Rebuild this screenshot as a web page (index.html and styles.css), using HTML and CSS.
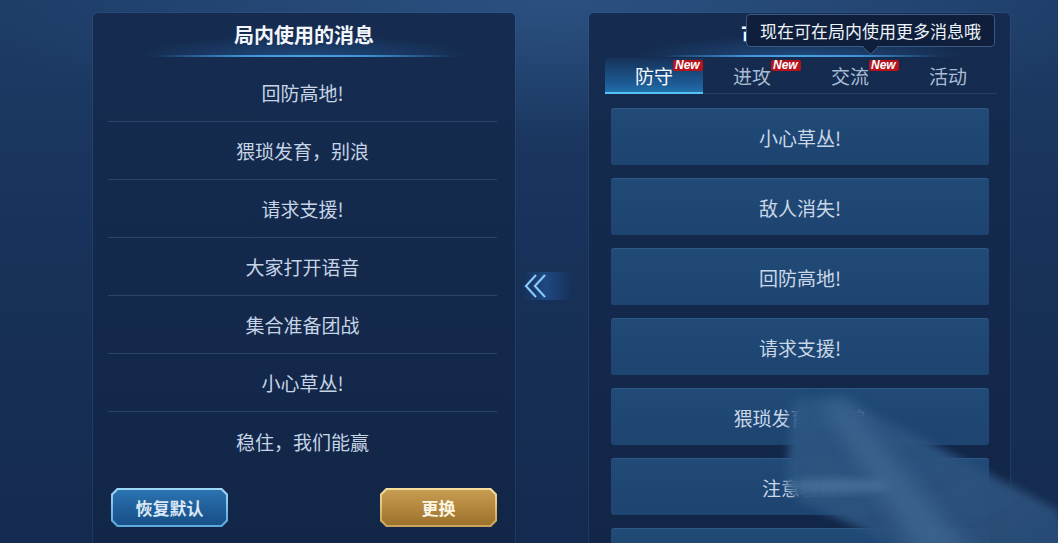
FILE: index.html
```html
<!DOCTYPE html>
<html lang="zh-CN">
<head>
<meta charset="utf-8">
<title>消息设置</title>
<link rel="stylesheet" href="styles.css">
</head>
<body>
<div class="screen">
  <section class="panel panel-left">
    <header class="panel-title">局内使用的消息</header>
    <ul class="msg-list">
      <li>回防高地!</li>
      <li>猥琐发育，别浪</li>
      <li>请求支援!</li>
      <li>大家打开语音</li>
      <li>集合准备团战</li>
      <li>小心草丛!</li>
      <li>稳住，我们能赢</li>
    </ul>
    <div class="actions">
      <button class="btn btn-blue"><span>恢复默认</span></button>
      <button class="btn btn-gold"><span>更换</span></button>
    </div>
  </section>

  <div class="mid">
    <div class="arrow">
      <svg width="26" height="28" viewBox="0 0 26 28">
        <path d="M12 3 L2 14 L12 25" fill="none" stroke="#5aa6ea" stroke-width="2.6"/>
        <path d="M21 3 L11 14 L21 25" fill="none" stroke="#5aa6ea" stroke-width="2.6"/>
        <path d="M12 3 L2 14 L12 25" fill="none" stroke="#d2eaff" stroke-width="0.9"/>
        <path d="M21 3 L11 14 L21 25" fill="none" stroke="#d2eaff" stroke-width="0.9"/>
      </svg>
    </div>
  </div>

  <section class="panel panel-right">
    <header class="panel-title">可更换的消息</header>
    <div class="tooltip">现在可在局内使用更多消息哦</div>
    <nav class="tabs">
      <div class="tab active"><span class="tab-label">防守<i class="badge">New</i></span></div>
      <div class="tab"><span class="tab-label">进攻<i class="badge">New</i></span></div>
      <div class="tab"><span class="tab-label">交流<i class="badge">New</i></span></div>
      <div class="tab"><span class="tab-label">活动</span></div>
    </nav>
    <div class="cards">
      <div class="card">小心草丛!</div>
      <div class="card">敌人消失!</div>
      <div class="card">回防高地!</div>
      <div class="card">请求支援!</div>
      <div class="card">猥琐发育，别浪</div>
      <div class="card">注意埋伏</div>
      <div class="card"></div>
    </div>
  </section>

  <svg class="streak" width="300" height="180" viewBox="0 0 300 180">
    <defs>
      <filter id="blur" x="-30%" y="-30%" width="160%" height="160%">
        <feGaussianBlur stdDeviation="4"/>
      </filter>
      <filter id="blur2" x="-30%" y="-30%" width="160%" height="160%">
        <feGaussianBlur stdDeviation="9"/>
      </filter>
      <linearGradient id="sg" x1="0" y1="0" x2="1" y2="1">
        <stop offset="0" stop-color="#2c5682" stop-opacity="1"/>
        <stop offset="1" stop-color="#2a4e78" stop-opacity="0.92"/>
      </linearGradient>
    </defs>
    <polygon points="22,22 72,19 288,132 300,175 150,178 28,122 16,106" fill="url(#sg)" filter="url(#blur)"/>
    <polygon points="52,26 76,24 205,178 150,178" fill="#3f6993" opacity="0.7" filter="url(#blur2)"/>
    <ellipse cx="68" cy="108" rx="50" ry="7" fill="#557fa8" opacity="0.6" filter="url(#blur)"/>
  </svg>
</div>
</body>
</html>
```
FILE: styles.css
```css
* { box-sizing: border-box; }
html, body { margin: 0; padding: 0; }
body {
  width: 1058px;
  height: 543px;
  overflow: hidden;
  font-family: "Noto Sans CJK SC", "Noto Sans", sans-serif;
  background: #17305a;
}
.screen {
  position: relative;
  width: 1058px;
  height: 543px;
  overflow: hidden;
  display: flex;
  align-items: flex-start;
  padding: 13px 0 0 93px;
  background:
    radial-gradient(ellipse 600px 140px at 560px 0px, rgba(70,120,180,0.35), transparent),
    linear-gradient(180deg, #1d3c66 0%, #173159 50%, #152a50 100%);
}
.panel {
  position: relative;
  height: 540px;
  background: linear-gradient(180deg, #152c50 0%, #13284a 60%, #122648 100%);
  border-radius: 5px 5px 0 0;
  box-shadow: 0 0 0 1px rgba(60,100,150,0.25);
}
.panel-left { width: 422px; }
.panel-right { width: 421px; padding: 0 13px 0 16px; }
.mid {
  width: 74px;
  height: 530px;
  display: flex;
  align-items: center;
  justify-content: flex-start;
}
.arrow {
  margin-top: 16px;
  margin-left: 9px;
  width: 48px;
  height: 28px;
  display: flex;
  align-items: center;
  background: linear-gradient(90deg, rgba(40,110,190,0.0) 0%, rgba(40,110,190,0.4) 45%, rgba(40,110,190,0) 100%);
}
.panel-title {
  height: 44px;
  display: flex;
  align-items: center;
  justify-content: center;
  padding-bottom: 2px;
  font-size: 20px;
  font-weight: 700;
  color: #f2f6fb;
  position: relative;
  background: radial-gradient(ellipse 170px 22px at 50% 100%, rgba(45,110,180,0.45), transparent);
}
.panel-title::after {
  content: "";
  position: absolute;
  left: 15%;
  right: 15%;
  bottom: 0;
  height: 2px;
  background: linear-gradient(90deg, rgba(60,140,210,0), #3f95d8 30%, #4aa2e2 50%, #3f95d8 70%, rgba(60,140,210,0));
}
.msg-list {
  list-style: none;
  margin: 7px 18px 0 15px;
  padding: 0;
}
.msg-list li {
  height: 58px;
  display: flex;
  align-items: center;
  justify-content: center;
  font-size: 19px;
  color: #c6d4e6;
  border-bottom: 1px solid #2a4569;
}
.msg-list li:last-child { border-bottom: none; }
.actions {
  display: flex;
  justify-content: space-between;
  padding: 18px 18px 0 18px;
}
.btn {
  position: relative;
  width: 117px;
  height: 39px;
  border: none;
  padding: 0;
  font-family: inherit;
  font-size: 17px;
  font-weight: 700;
  clip-path: polygon(6px 0, calc(100% - 6px) 0, 100% 6px, 100% calc(100% - 6px), calc(100% - 6px) 100%, 6px 100%, 0 calc(100% - 6px), 0 6px);
}
.btn::before {
  content: "";
  position: absolute;
  inset: 2px;
  clip-path: polygon(5px 0, calc(100% - 5px) 0, 100% 5px, 100% calc(100% - 5px), calc(100% - 5px) 100%, 5px 100%, 0 calc(100% - 5px), 0 5px);
}
.btn span { position: relative; }
.btn-blue { background: linear-gradient(180deg, #9fd8f7, #5aa8dc); color: #dbe8f5; }
.btn-blue::before { background: linear-gradient(180deg, #2b74b2 0%, #1f5d98 55%, #1a5088 100%); }
.btn-gold { background: linear-gradient(180deg, #f5df9c, #c9a25a); color: #fcf5e4; }
.btn-gold::before { background: linear-gradient(180deg, #c79d52 0%, #b1853c 55%, #9c712c 100%); }

.tooltip {
  position: absolute;
  left: 157px;
  top: 1px;
  width: 249px;
  height: 33px;
  display: flex;
  align-items: center;
  justify-content: center;
  font-size: 17px;
  color: #eef3f9;
  background: #0f1f3b;
  border: 1px solid #3a5a82;
  border-radius: 4px;
  z-index: 2;
}
.tooltip::after {
  content: "";
  position: absolute;
  left: 118px;
  bottom: -7px;
  width: 10px;
  height: 10px;
  background: #0f1f3b;
  border-right: 1px solid #3a5a82;
  border-bottom: 1px solid #3a5a82;
  transform: rotate(45deg);
}
.tabs {
  display: flex;
  height: 36px;
  margin-top: 1px;
  border-bottom: 1px solid #243f63;
}
.tab {
  width: 98px;
  display: flex;
  align-items: center;
  justify-content: center;
  font-size: 19px;
  color: #a9bcd4;
  position: relative;
}
.tab.active {
  color: #f4f8fc;
  background: linear-gradient(180deg, rgba(30,90,150,0.15) 0%, #1d5a94 75%, #2070aa 100%);
  border-bottom: 2px solid #56c2f2;
  margin-bottom: -1px;
}
.tab-label { position: relative; }
.badge {
  position: absolute;
  left: 100%;
  top: -2px;
  margin-left: 0;
  padding: 0 3px 0 2px;
  font-size: 12px;
  line-height: 11px;
  font-weight: 700;
  font-style: italic;
  font-family: "Liberation Sans", sans-serif;
  color: #ffffff;
  background: #b5141c;
  border-radius: 2px;
}
.cards {
  display: flex;
  flex-direction: column;
  gap: 13px;
  margin: 14px 8px 0 6px;
}
.card {
  height: 57px;
  flex: none;
  display: flex;
  align-items: center;
  justify-content: center;
  font-size: 19px;
  color: #c9d7e7;
  background: linear-gradient(180deg, #214a77 0%, #1e4470 100%);
  border-top: 1px solid #2d5a88;
  border-radius: 3px;
}
.streak {
  position: absolute;
  left: 770px;
  top: 378px;
  pointer-events: none;
}
```
